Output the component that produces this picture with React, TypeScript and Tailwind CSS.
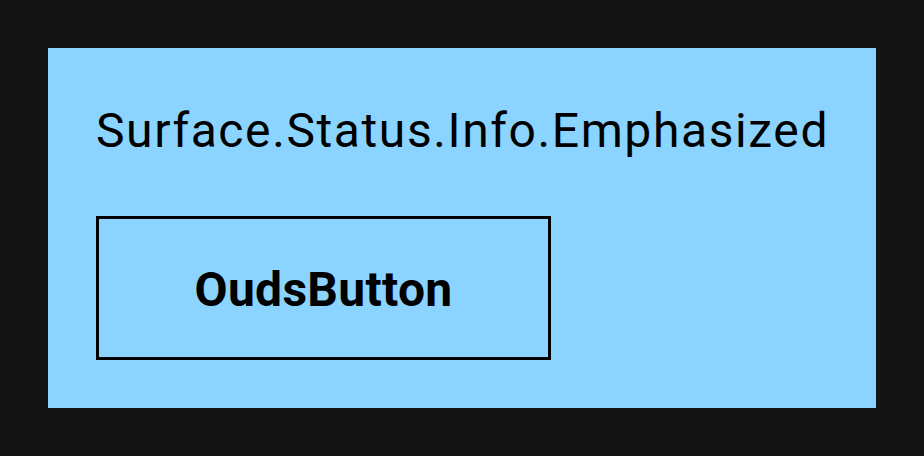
export default function App() {
  return (
    <div className="w-[924px] h-[456px] bg-[#141414] p-12" style={{ fontFamily: "Roboto, sans-serif" }}>
      <div className="h-full bg-[#8ad4ff] px-12 pt-[55px] flex flex-col items-start">
        <div className="text-[48px] leading-[56px] tracking-[1.6px] text-black whitespace-nowrap">Surface.Status.Info.Emphasized</div>
        <div className="mt-[57px] w-[455px] h-[144px] border-[3px] border-black pt-[4px] flex items-center justify-center">
          <span className="text-[48px] leading-[56px] font-bold tracking-[0.3px] text-black">OudsButton</span>
        </div>
      </div>
    </div>
  );
}
